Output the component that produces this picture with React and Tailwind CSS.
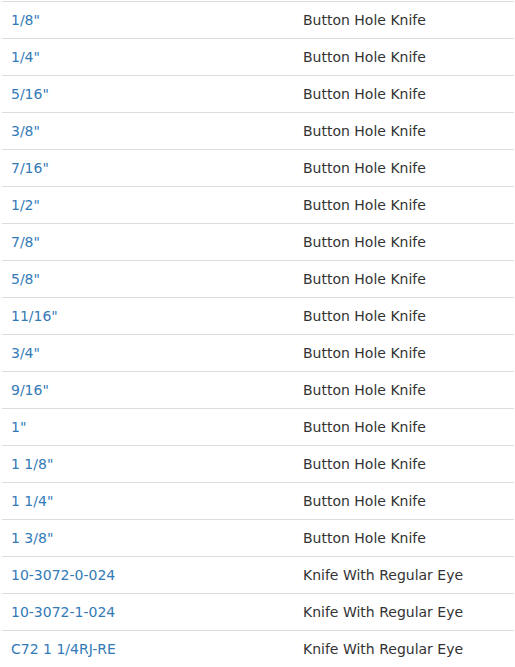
const ROWS = [
  ['1/8"', 'Button Hole Knife'],
  ['1/4"', 'Button Hole Knife'],
  ['5/16"', 'Button Hole Knife'],
  ['3/8"', 'Button Hole Knife'],
  ['7/16"', 'Button Hole Knife'],
  ['1/2"', 'Button Hole Knife'],
  ['7/8"', 'Button Hole Knife'],
  ['5/8"', 'Button Hole Knife'],
  ['11/16"', 'Button Hole Knife'],
  ['3/4"', 'Button Hole Knife'],
  ['9/16"', 'Button Hole Knife'],
  ['1"', 'Button Hole Knife'],
  ['1 1/8"', 'Button Hole Knife'],
  ['1 1/4"', 'Button Hole Knife'],
  ['1 3/8"', 'Button Hole Knife'],
  ['10-3072-0-024', 'Knife With Regular Eye'],
  ['10-3072-1-024', 'Knife With Regular Eye'],
  ['C72 1 1/4RJ-RE', 'Knife With Regular Eye'],
]

export default function App() {
  return (
    <div className="min-h-screen bg-white pl-[2px] pr-[1px] pt-[1px] font-['DejaVu_Sans',sans-serif] text-[14px]">
      <table className="w-full border-collapse">
        <tbody>
          {ROWS.map(([size, name]) => (
            <tr key={size} className="border-t border-[#dddddd]">
              <td className="h-[37px] w-[292px] pl-[9px] align-middle text-[#337ab7]">
                <a href="#">{size}</a>
              </td>
              <td className="h-[37px] pl-[9px] align-middle text-[#333333]">{name}</td>
            </tr>
          ))}
        </tbody>
      </table>
    </div>
  )
}
